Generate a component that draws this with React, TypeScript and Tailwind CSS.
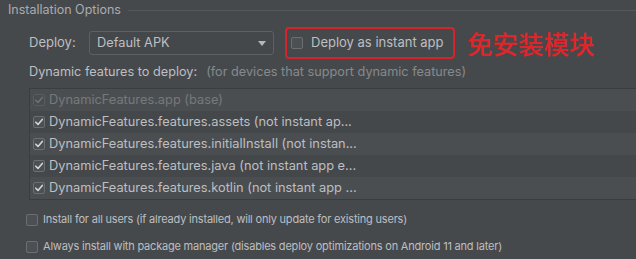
import React from "react";

interface Feature {
  label: string;
  disabled?: boolean;
}

const features: Feature[] = [
  { label: "DynamicFeatures.app (base)", disabled: true },
  { label: "DynamicFeatures.features.assets (not instant ap..." },
  { label: "DynamicFeatures.features.initialInstall (not instan..." },
  { label: "DynamicFeatures.features.java (not instant app e..." },
  { label: "DynamicFeatures.features.kotlin (not instant app ..." },
];

function Box({ checked, disabled }: { checked?: boolean; disabled?: boolean }) {
  return (
    <span
      className={
        "flex w-[12px] h-[12px] shrink-0 items-center justify-center rounded-[2px] border " +
        (disabled ? "border-[#5a5d60] bg-[#494c4f]" : "border-[#6c6f72] bg-[#4d5053]")
      }
    >
      {checked && (
        <svg width="10" height="10" viewBox="0 0 10 10">
          <path
            d="M1.8 5.2 L4 7.4 L8.3 2.4"
            fill="none"
            stroke={disabled ? "#6e7174" : "#d4d4d4"}
            strokeWidth="1.6"
            strokeLinecap="round"
            strokeLinejoin="round"
          />
        </svg>
      )}
    </span>
  );
}

export default function App() {
  return (
    <div className="w-[636px] h-[259px] overflow-hidden bg-[#46494c] text-[#bdbfc1] font-['Inter',sans-serif]">
      {/* Group title */}
      <div className="flex items-center h-[21px] pl-[8px]">
        <span className="text-[12.5px] text-[#a9acae]">Installation Options</span>
        <div className="flex-1 h-px ml-[7px] bg-[#55585b]" />
      </div>

      {/* Deploy row */}
      <div className="flex items-center h-[32px] mt-[6px] pl-[29px]">
        <span className="text-[13px] w-[60px]">Deploy:</span>
        <div className="flex items-center justify-between w-[185px] h-[24px] pl-[7px] pr-[7px] rounded-[3px] border border-[#5e6164] bg-[#45484b]">
          <span className="text-[12.8px]">Default APK</span>
          <svg width="8" height="5" viewBox="0 0 8 5">
            <path d="M0 0 H8 L4 5 Z" fill="#b5b7b9" />
          </svg>
        </div>
        <div className="flex items-center gap-[8px] ml-[11px] w-[170px] h-[32px] pl-[4px] rounded-[4px] border-2 border-[#d3242c]">
          <Box />
          <span className="text-[13px]">Deploy as instant app</span>
        </div>
        <span className="ml-[12px] text-[25.5px] leading-none font-medium text-[#e0252a] font-['Noto_Sans_CJK_SC',sans-serif]">
          免安装模块
        </span>
      </div>

      {/* Dynamic features label */}
      <div className="flex items-center h-[26px] pl-[29px] text-[12.7px]">
        <span>Dynamic features to deploy:</span>
        <span className="ml-[9px] text-[#86898c]">(for devices that support dynamic features)</span>
      </div>

      {/* Feature list */}
      <div className="mt-[3px] ml-[29px] border border-r-0 border-[#3b3d40] bg-[#46494c]">
        {features.map((f, i) => (
          <div
            key={i}
            className={
              "flex items-center gap-[4px] h-[22px] pl-[3px] text-[12.8px] " +
              (i % 2 === 0 ? "bg-[#4b4e51]" : "bg-[#45484b]") +
              (f.disabled ? " text-[#76797c]" : "")
            }
          >
            <Box checked disabled={f.disabled} />
            <span className="whitespace-nowrap">{f.label}</span>
          </div>
        ))}
      </div>

      {/* Install options */}
      <div className="mt-[6px] pl-[26px] text-[11px] tracking-[-0.2px]">
        <div className="flex items-center gap-[5px] h-[27px]">
          <Box />
          <span className="whitespace-nowrap">
            Install for all users (if already installed, will only update for existing users)
          </span>
        </div>
        <div className="flex items-center gap-[5px] h-[27px]">
          <Box />
          <span className="whitespace-nowrap">
            Always install with package manager (disables deploy optimizations on Android 11 and later)
          </span>
        </div>
      </div>
    </div>
  );
}
